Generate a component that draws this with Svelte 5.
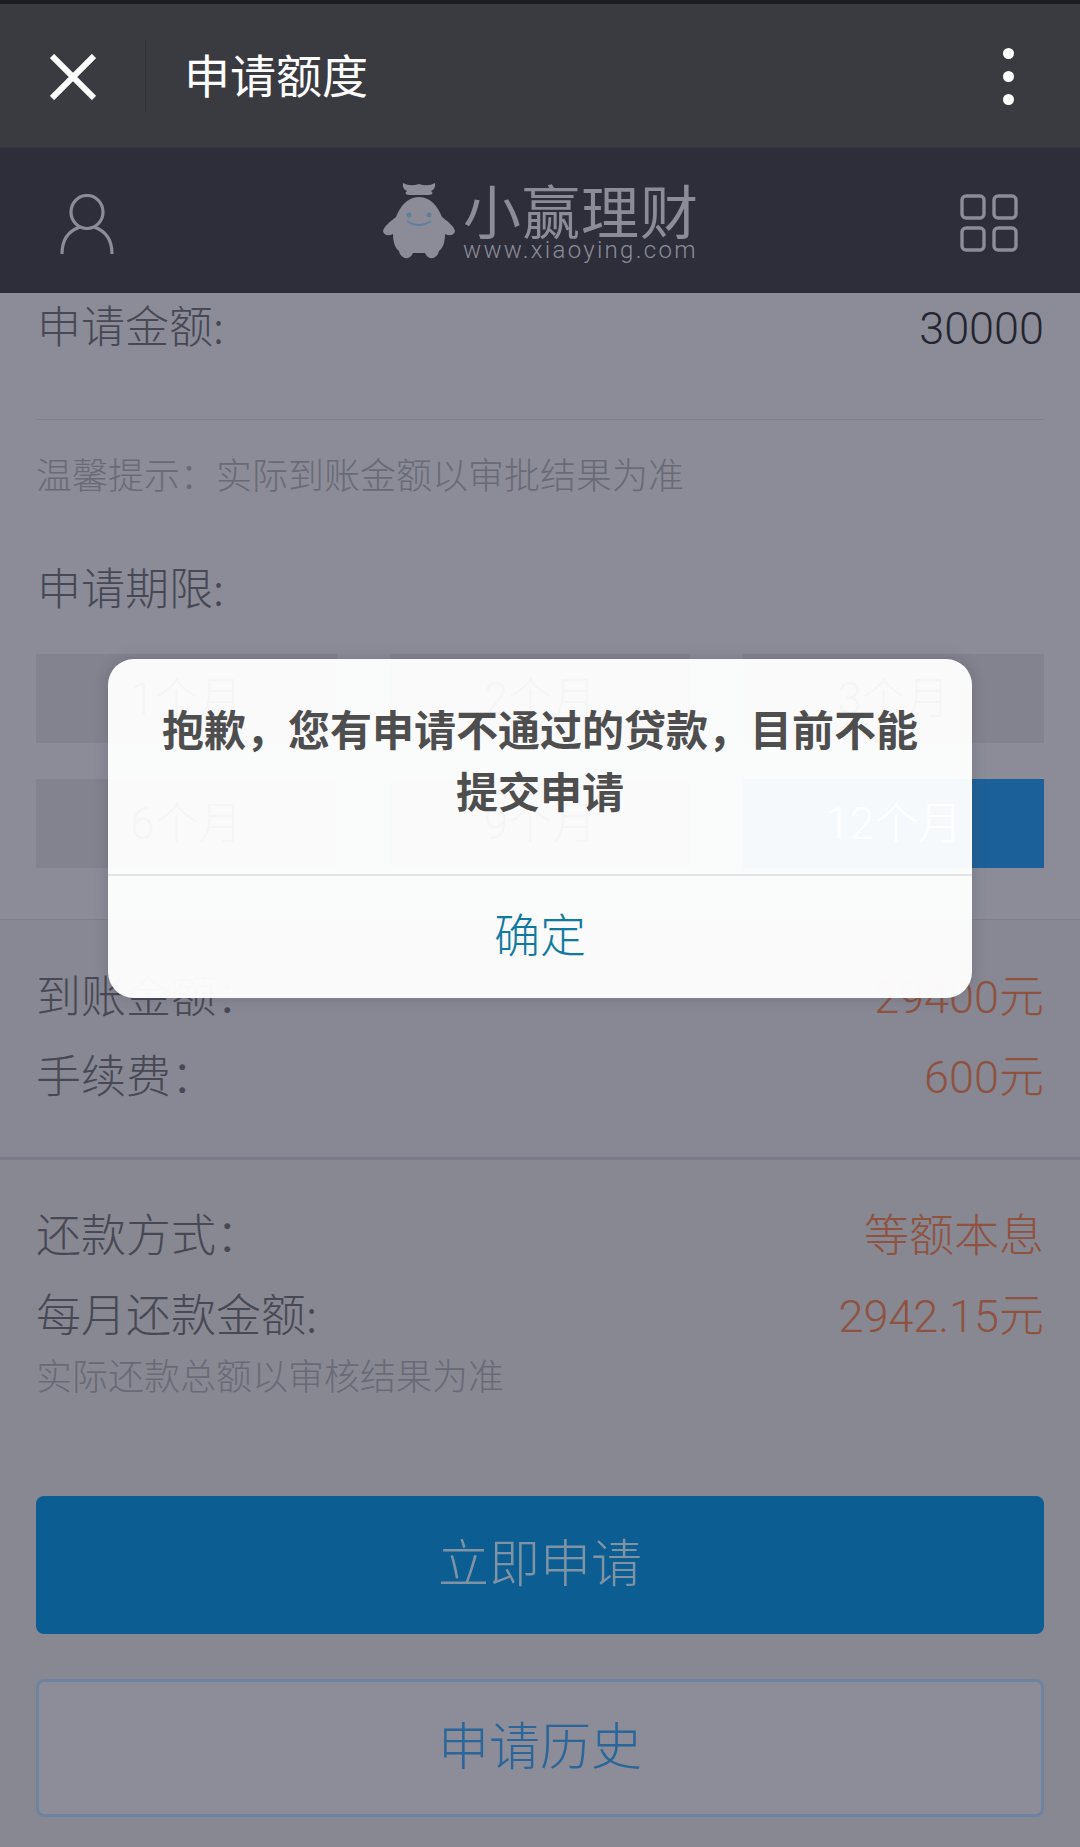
<script>
  const months = ['1个月', '2个月', '3个月', '6个月', '9个月', '12个月'];
  const selected = '12个月';

  const feeRows = [
    { label: '到账金额\uFF1A', value: '29400元' },
    { label: '手续费\uFF1A', value: '600元' }
  ];
</script>

<div class="page">
  <div class="statusbar"></div>

  <nav class="navbar">
    <svg class="close" viewBox="0 0 46 46" width="46" height="46" aria-hidden="true">
      <path d="M2 2 L44 44 M44 2 L2 44" stroke="#fff" stroke-width="6" fill="none" />
    </svg>
    <span class="nav-divider"></span>
    <span class="nav-title">申请额度</span>
    <span class="dots"><i></i><i></i><i></i></span>
  </nav>

  <header class="brandbar">
    <svg class="person" viewBox="0 0 54 60" width="54" height="60" aria-hidden="true" fill="none" stroke="#8b8c98" stroke-width="3.2">
      <ellipse cx="27" cy="18" rx="16" ry="16.5" />
      <path d="M20 33 C8 37 2 47 2 60 M34 33 C46 37 52 47 52 60" />
    </svg>

    <div class="logo">
      <svg viewBox="0 0 72 76" width="72" height="76" aria-hidden="true">
        <path fill="#8b8c98" d="M20 0 Q27 4 36 1 Q45 4 52 0 Q53 6 48 8 Q52 11 46 12 L26 12 Q20 11 24 8 Q19 6 20 0 Z" />
        <path fill="#8b8c98" d="M36 14 C48 14 55 24 59 34 C64 38 71 43 72 48 C71 53 66 53 62 51 C62 59 60 65 56 68 C55 73 51 76 47 75 C44 74 43 72 42 70 L30 70 C29 72 28 74 25 75 C21 76 17 73 16 68 C12 65 10 59 10 51 C6 53 1 53 0 48 C1 43 8 38 13 34 C17 24 24 14 36 14 Z" />
        <circle cx="26" cy="32" r="2.5" fill="#5f7f9c" />
        <circle cx="46" cy="32" r="2.5" fill="#5f7f9c" />
        <path d="M24 38 Q36 46 48 38" stroke="#5f7f9c" stroke-width="2" fill="none" />
      </svg>
      <div class="logo-text">
        <span class="logo-name">小赢理财</span>
        <span class="logo-url">www.xiaoying.com</span>
      </div>
    </div>

    <svg class="grid-icon" viewBox="0 0 58 58" width="58" height="58" aria-hidden="true" fill="none" stroke="#8b8c98" stroke-width="3.4">
      <rect x="2" y="2" width="22" height="22" rx="4" />
      <rect x="34" y="2" width="22" height="22" rx="4" />
      <rect x="2" y="34" width="22" height="22" rx="4" />
      <rect x="34" y="34" width="22" height="22" rx="4" />
    </svg>
  </header>

  <section class="form">
    <div class="row amount">
      <span class="label">申请金额:</span>
      <span class="num">30000</span>
    </div>
    <p class="hint">温馨提示&#xFF1A;实际到账金额以审批结果为准</p>
    <div class="label term">申请期限:</div>
    <div class="months">
      {#each months as month}
        <div class="month" class:active={month === selected}>{month}</div>
      {/each}
    </div>
  </section>

  <section class="fees">
    {#each feeRows as row}
      <div class="row">
        <span class="label">{row.label}</span>
        <span class="num orange">{row.value}</span>
      </div>
    {/each}
  </section>

  <section class="repay">
    <div class="row">
      <span class="label">还款方式&#xFF1A;</span>
      <span class="num orange">等额本息</span>
    </div>
    <div class="row">
      <span class="label">每月还款金额:</span>
      <span class="num orange">2942.15元</span>
    </div>
    <p class="hint note">实际还款总额以审核结果为准</p>
    <button class="btn primary">立即申请</button>
    <button class="btn ghost">申请历史</button>
  </section>

  <div class="dialog">
    <p class="message">抱歉&#xFF0C;您有申请不通过的贷款&#xFF0C;目前不能提交申请</p>
    <div class="confirm">确定</div>
  </div>
</div>

<style>
  :global(body) {
    margin: 0;
    background: #8a8b97;
  }

  .page {
    position: relative;
    width: 1080px;
    height: 1847px;
    overflow: hidden;
    background: #8b8c98;
    font-family: "Noto Sans CJK SC", "Roboto", sans-serif;
    font-weight: 300;
  }

  .statusbar {
    height: 4px;
    background: #1c1d21;
  }

  .navbar {
    display: flex;
    align-items: center;
    height: 144px;
    padding: 0 50px;
    box-sizing: border-box;
    background: #3a3b40;
    border-bottom: 1px solid #34353a;
  }

  .close {
    flex: none;
    margin-top: 2px;
  }

  .nav-divider {
    width: 1px;
    height: 72px;
    margin-left: 49px;
    background: #313237;
  }

  .nav-title {
    margin: 0 0 5px 38px;
    color: #fff;
    font-size: 46px;
    font-weight: 400;
    line-height: 1;
  }

  .dots {
    display: flex;
    flex-direction: column;
    gap: 12px;
    margin: 2px 16px 0 auto;
  }

  .dots i {
    display: block;
    width: 11px;
    height: 11px;
    border-radius: 50%;
    background: #fff;
  }

  .brandbar {
    display: flex;
    align-items: center;
    justify-content: space-between;
    height: 145px;
    padding: 0 62px 0 60px;
    box-sizing: border-box;
    background: #2d2e3a;
  }

  .person {
    margin-top: 6px;
  }

  .grid-icon {
    margin-top: 4px;
  }

  .logo {
    display: flex;
    align-items: center;
    gap: 8px;
    margin-left: 8px;
  }

  .logo-text {
    display: flex;
    flex-direction: column;
    color: #8b8c98;
  }

  .logo-name {
    font-size: 58px;
    font-weight: 400;
    letter-spacing: 1px;
    line-height: 58px;
  }

  .logo-url {
    font-family: "Roboto", sans-serif;
    font-size: 24px;
    line-height: 24px;
    letter-spacing: 2.3px;
  }

  .form {
    padding: 0 36px;
  }

  .row {
    display: flex;
    align-items: center;
    justify-content: space-between;
    height: 80px;
  }

  .amount {
    height: 126px;
    align-items: flex-start;
    border-bottom: 1px solid #7f808c;
    line-height: 62px;
  }

  .amount .num {
    margin-top: 5px;
  }

  .label {
    color: #474854;
    font-size: 45px;
  }

  .form .label {
    font-size: 44px;
    margin-left: 1px;
  }

  .num {
    color: #24252e;
    font-family: "Roboto", "Noto Sans CJK SC", sans-serif;
    font-size: 45px;
    white-space: nowrap;
  }

  .orange {
    color: #8f5240;
  }

  .hint {
    margin: 0;
    color: #696a76;
    font-size: 36px;
    line-height: 1;
  }

  .form .hint {
    margin-top: 35px;
  }

  .term {
    margin-top: 73px;
    line-height: 1;
  }

  .months {
    display: grid;
    grid-template-columns: repeat(3, 1fr);
    column-gap: 53px;
    row-gap: 36px;
    margin-top: 46px;
  }

  .month {
    display: flex;
    align-items: center;
    justify-content: center;
    height: 89px;
    padding-bottom: 8px;
    box-sizing: border-box;
    background: #82838e;
    color: #000;
    font-family: "Roboto", "Noto Sans CJK SC", sans-serif;
    font-size: 44px;
  }

  .month.active {
    background: #1c6099;
    color: #fff;
  }

  .fees {
    margin-top: 51px;
    padding: 33px 36px 44px;
    border-top: 1px solid #7d7e89;
    border-bottom: 3px solid #7b7c88;
    background: #878893;
  }

  .repay {
    padding: 32px 36px 0;
    background: #878892;
    height: 690px;
  }

  .note {
    margin-top: 4px;
  }

  .btn {
    display: block;
    width: 100%;
    height: 138px;
    padding: 0 0 10px;
    box-sizing: border-box;
    border-radius: 8px;
    font-family: inherit;
    font-weight: 300;
    font-size: 51px;
  }

  .primary {
    margin-top: 104px;
    border: 0;
    background: #0c5d92;
    color: #7f93a5;
  }

  .ghost {
    margin-top: 45px;
    border: 3px solid #6f82a0;
    background: #8c8d98;
    color: #2a6699;
  }

  .dialog {
    position: absolute;
    top: 659px;
    left: 108px;
    width: 864px;
    height: 339px;
    border-radius: 26px;
    background: rgba(255, 255, 255, 0.96);
    box-shadow: 0 0 14px rgba(60, 60, 75, 0.25);
    text-align: center;
  }

  .message {
    height: 217px;
    margin: 0;
    padding: 38px 50px 0;
    box-sizing: border-box;
    border-bottom: 2px solid #e4e4e6;
    color: #4e4e4e;
    font-size: 42px;
    font-weight: 700;
    line-height: 62px;
  }

  .confirm {
    color: #10799f;
    font-size: 46px;
    line-height: 112px;
  }
</style>
